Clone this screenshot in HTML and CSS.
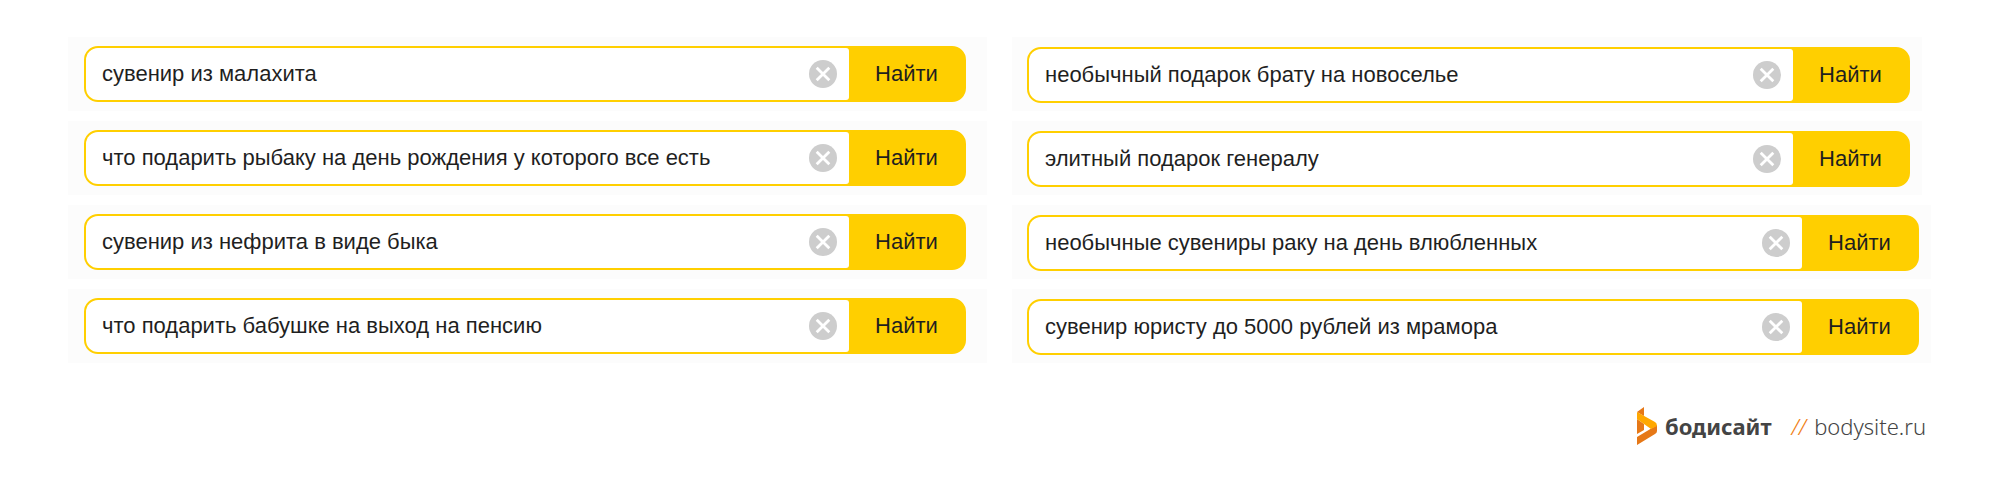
FILE: index.html
```
<!DOCTYPE html>
<html lang="ru">
<head>
    <meta charset="UTF-8">
    <meta name="viewport" content="width=device-width, initial-scale=1.0">
    <title>Примеры поисковых запросов</title>
    <link rel="stylesheet" href="styles.css">
</head>
<body>
    <svg class="sprite" aria-hidden="true">
        <symbol id="icon-clear" viewBox="0 0 28 28">
            <circle cx="14" cy="14" r="14" fill="#cdcdcd"/>
            <path d="M7.7 7.7l12.6 12.6M20.3 7.7L7.7 20.3" stroke="#fff" stroke-width="2.8" fill="none"/>
        </symbol>
    </svg>

    <main class="queries">
        <div class="column">
            <form class="panel" role="search">
                <div class="search">
                    <div class="search-field">
                        <input type="text" class="search-input" aria-label="Запрос" value="сувенир из малахита">
                        <button type="reset" class="search-clear" aria-label="Очистить"><svg><use href="#icon-clear"/></svg></button>
                    </div>
                    <button type="submit" class="search-button">Найти</button>
                </div>
            </form>
            <form class="panel" role="search">
                <div class="search">
                    <div class="search-field">
                        <input type="text" class="search-input" aria-label="Запрос" value="что подарить рыбаку на день рождения у которого все есть">
                        <button type="reset" class="search-clear" aria-label="Очистить"><svg><use href="#icon-clear"/></svg></button>
                    </div>
                    <button type="submit" class="search-button">Найти</button>
                </div>
            </form>
            <form class="panel" role="search">
                <div class="search">
                    <div class="search-field">
                        <input type="text" class="search-input" aria-label="Запрос" value="сувенир из нефрита в виде быка">
                        <button type="reset" class="search-clear" aria-label="Очистить"><svg><use href="#icon-clear"/></svg></button>
                    </div>
                    <button type="submit" class="search-button">Найти</button>
                </div>
            </form>
            <form class="panel" role="search">
                <div class="search">
                    <div class="search-field">
                        <input type="text" class="search-input" aria-label="Запрос" value="что подарить бабушке на выход на пенсию">
                        <button type="reset" class="search-clear" aria-label="Очистить"><svg><use href="#icon-clear"/></svg></button>
                    </div>
                    <button type="submit" class="search-button">Найти</button>
                </div>
            </form>
        </div>

        <div class="column column-right">
            <form class="panel panel-short" role="search">
                <div class="search">
                    <div class="search-field">
                        <input type="text" class="search-input" aria-label="Запрос" value="необычный подарок брату на новоселье">
                        <button type="reset" class="search-clear" aria-label="Очистить"><svg><use href="#icon-clear"/></svg></button>
                    </div>
                    <button type="submit" class="search-button">Найти</button>
                </div>
            </form>
            <form class="panel panel-short" role="search">
                <div class="search">
                    <div class="search-field">
                        <input type="text" class="search-input" aria-label="Запрос" value="элитный подарок генералу">
                        <button type="reset" class="search-clear" aria-label="Очистить"><svg><use href="#icon-clear"/></svg></button>
                    </div>
                    <button type="submit" class="search-button">Найти</button>
                </div>
            </form>
            <form class="panel" role="search">
                <div class="search">
                    <div class="search-field">
                        <input type="text" class="search-input" aria-label="Запрос" value="необычные сувениры раку на день влюбленных">
                        <button type="reset" class="search-clear" aria-label="Очистить"><svg><use href="#icon-clear"/></svg></button>
                    </div>
                    <button type="submit" class="search-button">Найти</button>
                </div>
            </form>
            <form class="panel" role="search">
                <div class="search">
                    <div class="search-field">
                        <input type="text" class="search-input" aria-label="Запрос" value="сувенир юристу до 5000 рублей из мрамора">
                        <button type="reset" class="search-clear" aria-label="Очистить"><svg><use href="#icon-clear"/></svg></button>
                    </div>
                    <button type="submit" class="search-button">Найти</button>
                </div>
            </form>
        </div>
    </main>

    <footer class="footer">
        <svg class="logo" viewBox="0 0 20 38" aria-hidden="true">
            <path d="M0 5L7 0V9L0 5z" fill="#e67817"/>
            <path d="M0 12L7 17V23L0 27z" fill="#e67817"/>
            <path d="M0 30L20 18V24Q20 26 18 27L0 38z" fill="#e67817"/>
            <path d="M0 5L18 15Q20 16 20 19L14 22L0 12z" fill="#ffa800"/>
        </svg>
        <span class="brand">бодисайт</span>
        <a class="site" href="#"><span class="slashes">//</span>bodysite.ru</a>
    </footer>
</body>
</html>
```
FILE: styles.css
```
:root {
    --yellow: #ffcf00;
    --panel: #fcfcfc;
    --text: #1f1f1f;
    --brand-text: #444;
    --orange: #f07d12;
}

* {
    margin: 0;
    padding: 0;
    box-sizing: border-box;
}

body {
    background-color: #fff;
    color: var(--text);
    font-family: "Liberation Sans", Arial, sans-serif;
    font-size: 22px;
}

.sprite {
    display: none;
}

.queries {
    display: grid;
    grid-template-columns: 1fr 1fr;
    gap: 25px;
    padding: 37px 68px 0;
}

.column {
    display: flex;
    flex-direction: column;
    gap: 10px;
}

.panel {
    padding: 9px 21px 9px 16px;
    background-color: var(--panel);
}

.column-right .panel {
    padding: 10px 12px 8px 15px;
}

.column-right .panel-short {
    margin-right: 9px;
}

.search {
    display: flex;
    height: 56px;
    border: 2px solid var(--yellow);
    border-radius: 14px;
    background-color: var(--yellow);
}

.search-field {
    display: flex;
    flex: 1;
    align-items: center;
    padding: 0 12px 0 16px;
    border-radius: 12px 3px 3px 12px;
    background-color: #fff;
}

.search-input {
    flex: 1;
    min-width: 0;
    border: none;
    outline: none;
    background: none;
    color: inherit;
    font: inherit;
}

.search-clear {
    width: 28px;
    height: 28px;
    border: none;
    background: none;
    cursor: pointer;
}

.search-clear svg {
    display: block;
    width: 28px;
    height: 28px;
}

.search-button {
    width: 115px;
    border: none;
    background: none;
    color: inherit;
    font: inherit;
    cursor: pointer;
}

.footer {
    display: flex;
    justify-content: flex-end;
    align-items: center;
    padding: 44px 73px 0 0;
    color: var(--brand-text);
    font-family: "Noto Sans", "Open Sans", sans-serif;
}

.logo {
    width: 20px;
    height: 38px;
    margin-right: 8px;
}

.brand {
    margin-right: 20px;
    font-size: 22px;
    font-weight: 700;
}

.site {
    color: inherit;
    font-size: 22px;
    font-weight: 300;
    text-decoration: none;
}

.slashes {
    margin-right: 8px;
    color: var(--orange);
    font-style: italic;
}
```
